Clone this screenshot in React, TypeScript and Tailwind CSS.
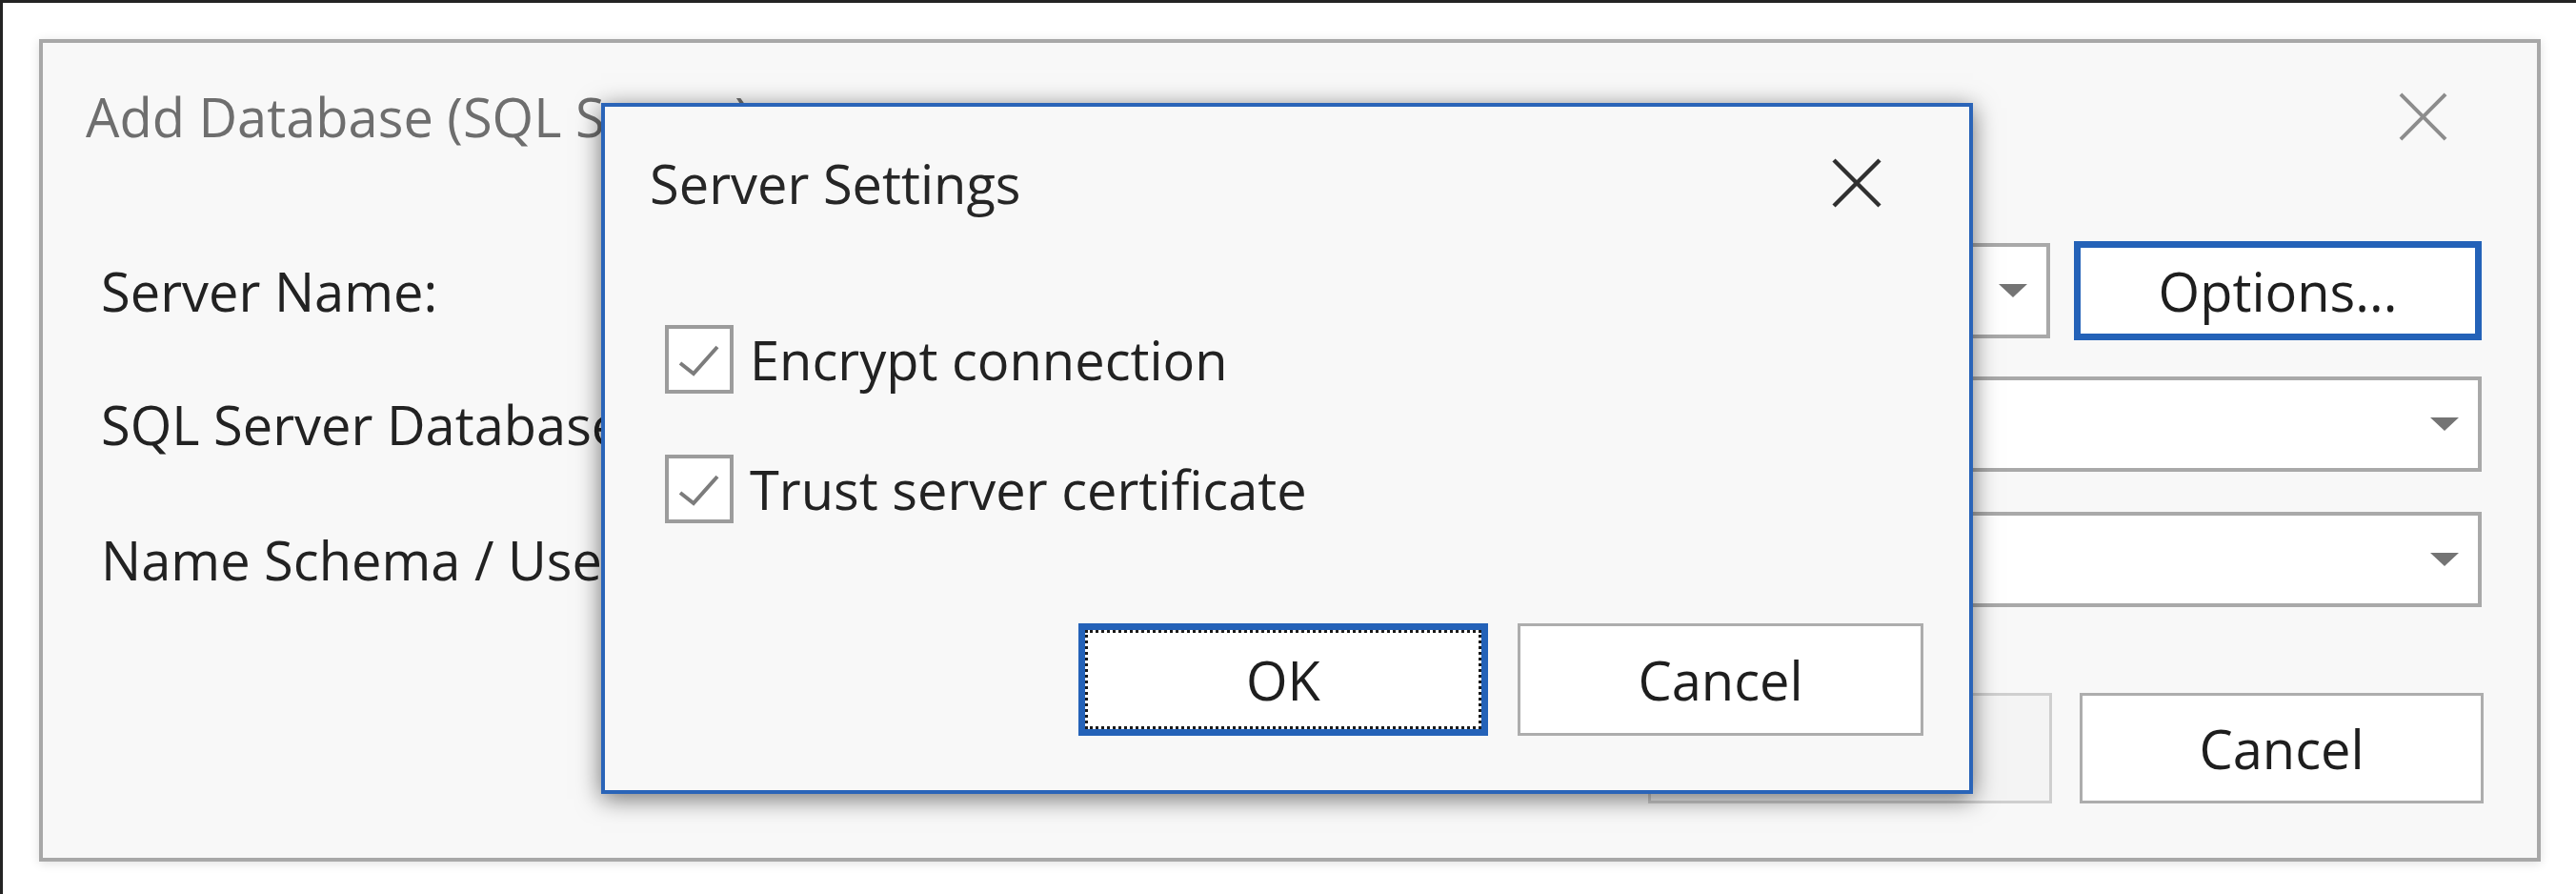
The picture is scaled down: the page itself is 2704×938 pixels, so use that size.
import React from 'react'

function CloseIcon({ color, size, stroke = 4 }: { color: string; size: string; stroke?: number }) {
  return (
    <svg viewBox="0 0 52 52" className={size} fill="none" stroke={color} strokeWidth={stroke}>
      <line x1="2" y1="2" x2="50" y2="50" />
      <line x1="50" y1="2" x2="2" y2="50" />
    </svg>
  )
}

function ComboBox({ className = '' }: { className?: string }) {
  return (
    <div className={`h-[100px] border-[4px] border-[#a9a9a9] bg-white flex items-center justify-end pr-[20px] ${className}`}>
      <svg viewBox="0 0 30 14" className="w-[30px] h-[14px]">
        <polygon points="0,0 30,0 15,14" fill="#747474" />
      </svg>
    </div>
  )
}

function CheckRow({ label }: { label: string }) {
  return (
    <div className="h-[72px] pl-[63px] flex items-center gap-[17px]">
      <div className="w-[72px] h-[72px] border-[4px] border-[#9c9c9c] bg-white shrink-0">
        <svg viewBox="0 0 64 64" className="w-[64px] h-[64px]" fill="none" stroke="#7c7c7c" strokeWidth={4}>
          <polyline points="12,36 26,47 51,19" />
        </svg>
      </div>
      <span className="text-[56px] leading-[76px] text-[#222222] whitespace-nowrap">{label}</span>
    </div>
  )
}

export default function App() {
  return (
    <div className="w-[2704px] h-[938px] overflow-hidden bg-white border-t-[3px] border-l-[3px] border-[#232323] pl-[38px] pt-[38px] font-['Open_Sans',sans-serif]">
      {/* main dialog */}
      <div className="relative w-[2626px] h-[863px] border-[4px] border-[#a8a8a8] bg-[#f8f8f8] shadow-[0_2px_10px_rgba(0,0,0,0.12)] flex flex-col">
        <div className="mt-[39px] h-[76px] pl-[45px] pr-[93px] flex items-center justify-between">
          <span className="text-[56px] leading-[76px] text-[#6e6e6e] whitespace-nowrap">Add Database (SQL Server)</span>
          <CloseIcon color="#8c8c8c" size="w-[53px] h-[51px]" />
        </div>

        <div className="mt-[93px] h-[104px] pl-[61px] pr-[58px] flex items-center">
          <span className="w-[894px] shrink-0 text-[56px] leading-[76px] text-[#222222] whitespace-nowrap">Server Name:</span>
          <ComboBox className="flex-1" />
          <button className="ml-[25px] w-[428px] h-[104px] border-[7px] border-[#2462b8] bg-white text-[56px] leading-[76px] text-[#1e1e1e]">
            Options...
          </button>
        </div>

        <div className="mt-[38px] h-[100px] pl-[61px] pr-[58px] flex items-center">
          <span className="w-[894px] shrink-0 text-[56px] leading-[76px] text-[#222222] whitespace-nowrap">SQL Server Database:</span>
          <ComboBox className="flex-1" />
        </div>

        <div className="mt-[42px] h-[100px] pl-[61px] pr-[58px] flex items-center">
          <span className="w-[894px] shrink-0 text-[56px] leading-[76px] text-[#222222] whitespace-nowrap">Name Schema / User:</span>
          <ComboBox className="flex-1" />
        </div>

        <div className="mt-[90px] h-[116px] pr-[56px] flex justify-end gap-[29px]">
          <button className="w-[424px] h-[116px] border-[3px] border-[#cfcfcf] bg-[#f4f4f4] text-[56px] leading-[76px] text-[#9a9a9a]">
            OK
          </button>
          <button className="w-[424px] h-[116px] border-[3px] border-[#adadad] bg-white text-[56px] leading-[76px] text-[#1e1e1e]">
            Cancel
          </button>
        </div>

        {/* server settings modal */}
        <div className="absolute left-[586px] top-[63px] w-[1440px] h-[725px] border-[4px] border-[#2a64b8] bg-[#f8f8f8] shadow-[0_5px_24px_rgba(0,0,0,0.55)] flex flex-col">
          <div className="mt-[42px] h-[76px] pl-[47px] pr-[92px] flex items-center justify-between">
            <span className="text-[56px] leading-[76px] text-[#262626] whitespace-nowrap">Server Settings</span>
            <CloseIcon color="#303030" size="w-[52px] h-[52px]" stroke={4.5} />
          </div>

          <div className="mt-[111px]">
            <CheckRow label="Encrypt connection" />
          </div>
          <div className="mt-[64px]">
            <CheckRow label="Trust server certificate" />
          </div>

          <div className="mt-[105px] pr-[48px] flex justify-end gap-[31px]">
            <button className="relative w-[430px] h-[118px] border-[7px] border-[#2462b8] bg-white text-[56px] leading-[76px] text-[#1e1e1e]">
              <span className="absolute inset-0 border-[3px] border-dotted border-[#1a1a1a]" />
              OK
            </button>
            <button className="w-[426px] h-[118px] border-[3px] border-[#adadad] bg-white text-[56px] leading-[76px] text-[#1e1e1e]">
              Cancel
            </button>
          </div>
        </div>
      </div>
    </div>
  )
}
